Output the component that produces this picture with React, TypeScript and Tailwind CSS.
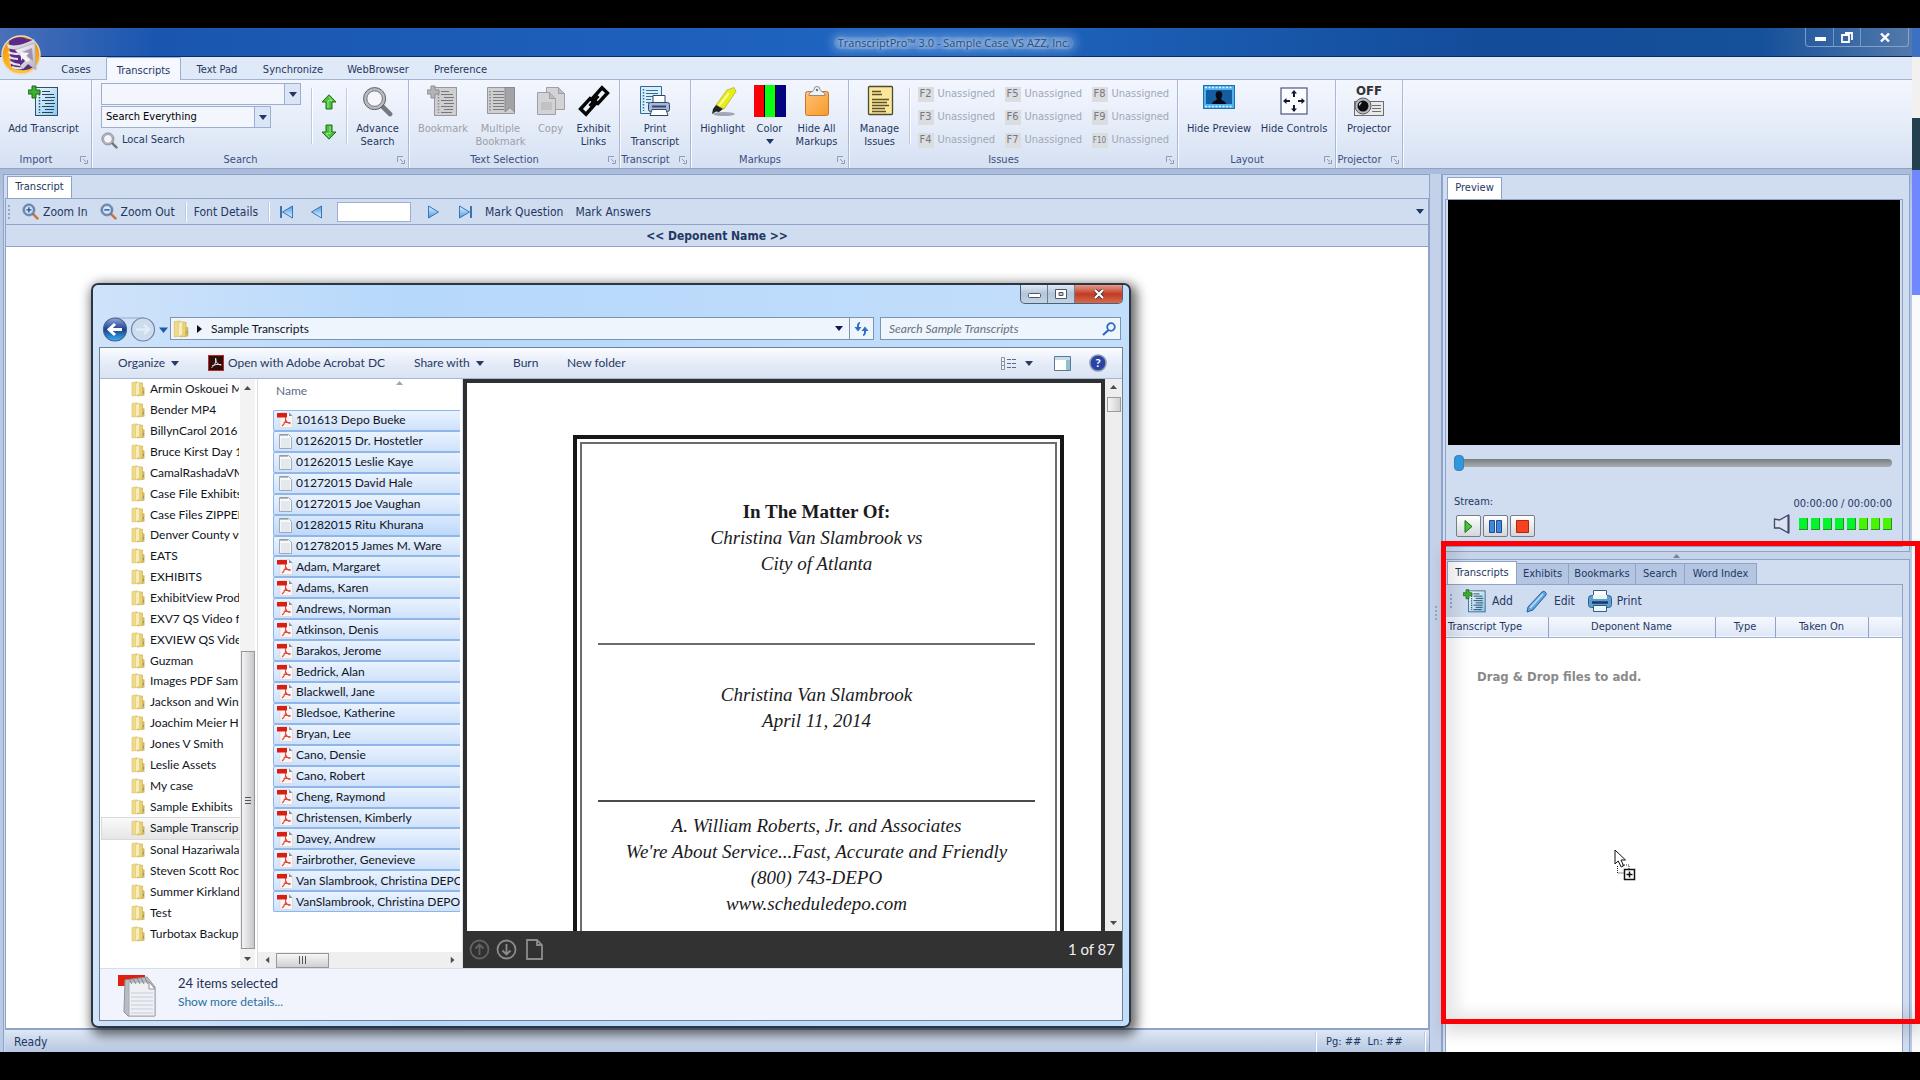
import React, { useState } from 'react';

const FOLDERS = [
  'Armin Oskouei M', 'Bender MP4', 'BillynCarol 2016', 'Bruce Kirst Day 11', 'CamalRashadaVM', 'Case File Exhibits',
  'Case Files ZIPPED', 'Denver County vs', 'EATS', 'EXHIBITS', 'ExhibitView Prod', 'EXV7 QS Video fil',
  'EXVIEW QS Video', 'Guzman', 'Images PDF Sam', 'Jackson and Wins', 'Joachim Meier H', 'Jones V Smith',
  'Leslie Assets', 'My case', 'Sample Exhibits', 'Sample Transcrip', 'Sonal Hazariwala', 'Steven Scott Roc',
  'Summer Kirkland', 'Test', 'Turbotax Backup',
];

const FILES: { name: string; kind: 'pdf' | 'txt' }[] = [
  { name: '101613 Depo Bueke', kind: 'pdf' },
  { name: '01262015 Dr. Hostetler', kind: 'txt' },
  { name: '01262015 Leslie Kaye', kind: 'txt' },
  { name: '01272015 David Hale', kind: 'txt' },
  { name: '01272015 Joe Vaughan', kind: 'txt' },
  { name: '01282015 Ritu Khurana', kind: 'txt' },
  { name: '012782015 James M. Ware', kind: 'txt' },
  { name: 'Adam, Margaret', kind: 'pdf' },
  { name: 'Adams, Karen', kind: 'pdf' },
  { name: 'Andrews, Norman', kind: 'pdf' },
  { name: 'Atkinson, Denis', kind: 'pdf' },
  { name: 'Barakos, Jerome', kind: 'pdf' },
  { name: 'Bedrick, Alan', kind: 'pdf' },
  { name: 'Blackwell, Jane', kind: 'pdf' },
  { name: 'Bledsoe, Katherine', kind: 'pdf' },
  { name: 'Bryan, Lee', kind: 'pdf' },
  { name: 'Cano, Densie', kind: 'pdf' },
  { name: 'Cano, Robert', kind: 'pdf' },
  { name: 'Cheng, Raymond', kind: 'pdf' },
  { name: 'Christensen, Kimberly', kind: 'pdf' },
  { name: 'Davey, Andrew', kind: 'pdf' },
  { name: 'Fairbrother, Genevieve', kind: 'pdf' },
  { name: 'Van Slambrook, Christina DEPO', kind: 'pdf' },
  { name: 'VanSlambrook, Christina DEPO', kind: 'pdf' },
];

const ISSUE_KEYS = ['F2', 'F5', 'F8', 'F3', 'F6', 'F9', 'F4', 'F7', 'F10'];

/* ---------- icons ---------- */

const Caret = ({ className = '' }: { className?: string }) => (
  <svg width={8} height={5} viewBox="0 0 8 5" className={`shrink-0 ${className}`}>
    <path d="M0 0h8L4 5z" fill="currentColor" />
  </svg>
);

const AppLogo = () => (
  <svg width={40} height={40} viewBox="0 0 40 40">
    <defs>
      <radialGradient id="orb" cx="50%" cy="80%" r="80%">
        <stop offset="0" stopColor="#ffd23a" />
        <stop offset="0.6" stopColor="#f9a818" />
        <stop offset="1" stopColor="#e58a0c" />
      </radialGradient>
      <linearGradient id="orbSilver" x1="0" y1="0" x2="1" y2="1">
        <stop offset="0" stopColor="#ffffff" />
        <stop offset="1" stopColor="#b4b0c0" />
      </linearGradient>
    </defs>
    <circle cx="20" cy="20" r="19" fill="url(#orb)" stroke="#e9dcc0" strokeWidth="1.5" />
    <path d="M8 6c5-4 13-5 18-2l7 1-1 27c-6 5-17 4-22-1z" fill="#5b2a86" />
    <path d="M6 9c6 3 17 1 27-5l1 5C25 15 14 16 7 13z" fill="url(#orbSilver)" />
    <path d="M7 17c4 2 7 2 11 2M8 22c4 2 6 2 9 2M9 27c3 2 6 3 10 3M11 32c3 1 6 2 10 1" stroke="#e8e4ef" strokeWidth="2.200" fill="none" />
    <path d="M14 15l20-7 1 27-8-6-5 5-3-3 5-5z" fill="url(#orbSilver)" stroke="#9d99ab" strokeWidth="0.500" />
    <path d="M21 17l10-4 1 13z" fill="#7a6994" opacity="0.6" />
    <path d="M20 17l8 1-3 3 4 4-3 2-4-4-2 3z" fill="#f5f4f8" />
  </svg>
);

const DocLines = ({ muted = false, size = 32 }: { muted?: boolean; size?: number }) => (
  <svg width={size} height={size} viewBox="0 0 32 32">
    <defs>
      <linearGradient id="docBlue" x1="0" y1="0" x2="1" y2="1">
        <stop offset="0" stopColor="#f2fbff" />
        <stop offset="1" stopColor="#86c8f2" />
      </linearGradient>
    </defs>
    <rect x="7.500" y="2.500" width="22" height="28" fill={muted ? '#cfcfd2' : 'url(#docBlue)'} stroke={muted ? '#97979b' : '#2f4f66'} />
    <path d="M11.500 6v22" stroke={muted ? '#8a8a8e' : '#30506a'} strokeWidth="1.500" strokeDasharray="1.500 1.500" />
    <path d="M14 6.500h8M14 9.500h12M17 12.500h10M14 15.500h12M17 18.500h10M14 21.500h12M17 24.500h9M14 27.500h11" stroke={muted ? '#77777b' : '#2c4257'} strokeWidth="1.200" />
    <path d="M4 1h4v4h4v4H8v4H4V9H0V5h4z" fill={muted ? '#b4b4b6' : '#3fae35'} stroke={muted ? '#8f8f92' : '#186b17'} />
  </svg>
);

const MultiBookmarkIcon = () => (
  <svg width={32} height={32} viewBox="0 0 32 32">
    <path d="M2.500 2.500h27v26h-27z" fill="#cfcfd2" stroke="#97979b" />
    <path d="M5 6v20" stroke="#88888c" strokeWidth="1.500" strokeDasharray="1.500 1.500" />
    <path d="M8 6.500h11M8 9.500h11M8 12.500h11M8 15.500h11M8 18.500h11M8 21.500h11M8 24.500h11" stroke="#7b7b7f" strokeWidth="1.200" />
    <path d="M20 2.500h9.500V27L25 22.500 20 27z" fill="#a3a3a7" stroke="#8b8b8f" />
  </svg>
);

const CopyIcon = () => (
  <svg width={32} height={32} viewBox="0 0 32 32" fill="#d3d3d6" stroke="#a0a0a4">
    <path d="M11.500 2.500h12l6 6v16h-18z" />
    <path d="M23.500 2.500v6h6" fill="#bcbcc0" />
    <path d="M2.500 7.500h12l6 6v16h-18z" />
    <path d="M14.500 7.500v6h6" fill="#bcbcc0" />
    <path d="M6 17h11v8H6z" fill="#c2c2c6" stroke="none" />
  </svg>
);

const ChainIcon = () => (
  <svg width={32} height={32} viewBox="0 0 32 32" fill="none" stroke="#050505" strokeWidth="3.400">
    <path d="M14 14L24 2.800l5.500 5.200L20 18.500l-3-2.500" />
    <path d="M18 18L8 29.200 2.500 24 12 13.500l3 2.500" />
    <path d="M11.500 21l9-10" strokeWidth="2.800" />
  </svg>
);

const PrinterBody = ({ x = 0, y = 0, k = 1 }: { x?: number; y?: number; k?: number }) => (
  <g transform={`translate(${x} ${y}) scale(${k})`} stroke="#2e4767">
    <path d="M6 1.500h12v8H6z" fill="#fff" />
    <rect x="1.500" y="8.500" width="21" height="9" rx="2" fill="#a9b6da" />
    <path d="M5 12.500h14" stroke="#33486b" strokeWidth="2" />
    <path d="M5 15.500h14l2 6H3z" fill="#fff" />
  </g>
);

const PrintTranscriptIcon = () => (
  <svg width={32} height={32} viewBox="0 0 32 32">
    <path d="M1.500 1.500h21v27h-21z" fill="#d7eefb" stroke="#2e6b9c" />
    <path d="M4.500 4v22" stroke="#2e6b9c" strokeWidth="1.500" strokeDasharray="1.500 1.500" />
    <path d="M7 5.500h12M7 8.500h12M7 11.500h9M7 14.500h5M7 17.500h3" stroke="#3b6d94" strokeWidth="1.200" />
    <PrinterBody x={8} y={9} />
  </svg>
);

const MarkerIcon = () => (
  <svg width={32} height={32} viewBox="0 0 32 32">
    <ellipse cx="17" cy="29" rx="11" ry="2" fill="#8e93a3" opacity="0.8" />
    <path d="M20 5l7-2.500 2 4L17 24l-8-4z" fill="#e7ee16" stroke="#a9ad20" strokeWidth="0.700" />
    <path d="M22 8L12 21" stroke="#f9fca0" strokeWidth="2" />
    <path d="M9 20l7 4-4 3-3-.5L5 29l1-5z" fill="#222" />
  </svg>
);

const ColorBarsIcon = () => (
  <svg width={32} height={32} viewBox="0 0 32 32">
    <path d="M0 0h32v32H0z" fill="#000" />
    <path d="M0 0h10v32H0z" fill="#fb0007" />
    <path d="M11 0h10v32H11z" fill="#0bff14" />
    <path d="M22 0h10v32H22z" fill="#04047e" />
  </svg>
);

const ClipboardIcon = () => (
  <svg width={32} height={32} viewBox="0 0 32 32">
    <defs>
      <linearGradient id="clip" x1="0" y1="0" x2="1" y2="1">
        <stop offset="0" stopColor="#ffc274" />
        <stop offset="1" stopColor="#f79a2c" />
      </linearGradient>
    </defs>
    <rect x="4.500" y="6.500" width="23" height="24" rx="2" fill="url(#clip)" stroke="#c9782a" />
    <path d="M8 10.500c0-4 4-3 5-6a3 3 0 0 1 6 0c1 3 5 2 5 6z" fill="#f2f2f4" stroke="#8b8b92" />
    <circle cx="16" cy="5" r="1.200" fill="#73737c" />
  </svg>
);

const ManageIcon = () => (
  <svg width={32} height={32} viewBox="0 0 32 32">
    <rect x="4.500" y="1.500" width="24" height="28" rx="1" fill="#fbe79a" stroke="#4b4a33" strokeWidth="1.300" />
    <path d="M8 6.500h9M8 9.500h10M8 14.500h17M8 17.500h15M8 20.500h17M8 23.500h13M8 26.500h14" stroke="#5d532f" strokeWidth="1.300" />
  </svg>
);

const PreviewIcon = () => (
  <svg width={32} height={32} viewBox="0 0 32 32">
    <rect x="0.500" y="0.500" width="31" height="23" fill="#4fb1ee" stroke="#1d6fae" />
    <path d="M2 2.500h28M2 21.500h28" stroke="#dff2ff" strokeWidth="1.500" strokeDasharray="2 1.500" />
    <path d="M3 5h26v14H3z" fill="#135da0" />
    <path d="M9 19c0-3 4-3 5-5-2-3-2-8 2-8s4 5 2 8c1 2 5 2 5 5z" fill="#050a12" />
  </svg>
);

const MoveIcon = () => (
  <svg width={32} height={32} viewBox="0 0 32 32">
    <rect x="3" y="3" width="26" height="26" fill="#fbfcff" stroke="#4f5680" strokeWidth="1.200" />
    <g fill="#15182c">
      <path d="M16 5l3 3.500h-2V12h-2V8.500h-2zM16 27l3-3.500h-2V20h-2v3.500h-2zM5 16l3.500-3v2H12v2H8.500v2zM27 16l-3.500-3v2H20v2h3.500v2z" />
    </g>
  </svg>
);

const ProjectorIcon = () => (
  <svg width={32} height={20} viewBox="0 0 32 20">
    <rect x="1.500" y="4.500" width="29" height="14" fill="#e9e9ea" stroke="#6e6e72" />
    <path d="M19 8.500h9M19 11.500h9M19 14.500h9" stroke="#6f6f73" />
    <circle cx="10" cy="9" r="8" fill="#b9babd" stroke="#5d5d60" />
    <circle cx="10" cy="9" r="5.500" fill="#0d0d0f" />
    <path d="M8.500 5.500a3 3 0 0 0-2 3" stroke="#e8e8e8" fill="none" strokeWidth="1.300" />
  </svg>
);

const Magnifier = ({ size, sign, tint = '#6d6f76' }: { size: number; sign?: string; tint?: string }) => (
  <svg width={size} height={size} viewBox="0 0 16 16" fill="none">
    <path d="M9.800 9.800l4.700 4.700" stroke={sign ? '#c9763a' : '#77787e'} strokeWidth="2.400" strokeLinecap="round" />
    <circle cx="6.500" cy="6.500" r="4.800" fill={sign ? '#d3e6fb' : '#f4f6fb'} stroke={sign ? tint : '#b9bbc1'} strokeWidth="1.500" />
    <circle cx="6.500" cy="6.500" r="5.700" stroke="#54565c" strokeWidth="0.500" />
    <circle cx="6.500" cy="6.500" r="4" stroke="#54565c" strokeWidth="0.400" />
    {sign && <path d={sign} stroke="#2a4f94" strokeWidth="1.300" />}
  </svg>
);

const GreenArrow = ({ down = false }: { down?: boolean }) => (
  <svg width={16} height={16} viewBox="0 0 16 16" className={down ? 'rotate-180' : ''}>
    <path d="M8 .8L15 8h-4v7H5V8H1z" fill="#4cc03c" stroke="#1d6d1a" strokeLinejoin="round" />
    <path d="M8 3l3 3.500H7V14" stroke="#9be889" fill="none" />
  </svg>
);

const NavArrow = ({ back = false, bar = false }: { back?: boolean; bar?: boolean }) => (
  <svg width={15} height={16} viewBox="0 0 15 16" className={back ? 'rotate-180' : ''}>
    <defs>
      <linearGradient id="navBlue" x1="0" y1="0" x2="0" y2="1">
        <stop offset="0" stopColor="#e4f3ff" />
        <stop offset="1" stopColor="#4a9be2" />
      </linearGradient>
    </defs>
    <path d="M1.500 2l10 6-10 6z" fill="url(#navBlue)" stroke="#3a74b5" strokeLinejoin="round" />
    {bar && <path d="M13 2v12" stroke="#3a74b5" strokeWidth="2" />}
  </svg>
);

const FolderIcon = ({ size = 16 }: { size?: number }) => (
  <svg width={size} height={size} viewBox="0 0 16 16" className="shrink-0">
    <path d="M2 1.500l5-.7v13.500l-5 .7z" fill="#efdb88" stroke="#d6bb62" strokeWidth="0.600" />
    <path d="M7 2h5.500v12.500L7 15z" fill="#ecd271" stroke="#c8aa4c" strokeWidth="0.600" />
    <path d="M5.500 2.500l4-1.500v12l-4 2z" fill="#f8edba" stroke="#dcc67a" strokeWidth="0.600" />
    <path d="M12.500 6l2 .5v8l-3 .5z" fill="#d6b654" />
    <path d="M13.500 10v2" stroke="#5f9fd0" />
  </svg>
);

const PdfIcon = () => (
  <svg width={16} height={16} viewBox="0 0 16 16" className="shrink-0">
    <path d="M3 .5h9l3.500 3.500v11.500H3z" fill="#fbf7f7" stroke="#d9d4d6" strokeWidth="0.700" />
    <path d="M12 .5V4h3.500z" fill="#8f8f95" />
    <path d="M0 1h10v4.500H0z" fill="#d71f14" />
    <path d="M8.500 5c.5 3.500-1 7-3.500 9M8.500 7.500c1 2.500 3 4 5 4M6.500 11c2-.8 4-1 7-.3" stroke="#e0483c" fill="none" strokeWidth="1.100" />
  </svg>
);

const TxtIcon = () => (
  <svg width={16} height={16} viewBox="0 0 16 16" className="shrink-0">
    <path d="M2.500 1.500h9l3 3v11h-12z" fill="#f6f8fa" stroke="#8f979f" strokeWidth="0.800" />
    <path d="M3 1l1 2 1-2 1 2 1-2 1 2 1-2 1 2 1-2" stroke="#8b9299" fill="none" strokeWidth="0.700" />
    <path d="M4 6h9M4 8h9M4 10h9M4 12h9M4 14h9" stroke="#c6d0d8" strokeWidth="0.800" />
  </svg>
);

const CursorIcon = () => (
  <svg width={22} height={32} viewBox="0 0 22 32">
    <path d="M1 1v14l3.200-3 3 6 2.500-1.200L7 11h4.500z" fill="#fff" stroke="#111" />
    <path d="M3.500 17v7h7M8 16h7v5" fill="none" stroke="#222" strokeDasharray="1 1" />
    <rect x="10.500" y="20.500" width="10" height="10" fill="#fff" stroke="#111" strokeWidth="1.500" />
    <path d="M15.500 22.500v6M12.500 25.500h6" stroke="#111" strokeWidth="1.500" />
  </svg>
);

/* ---------- ribbon ---------- */

interface GroupProps {
  title: string;
  className: string;
  children: React.ReactNode;
}

const RibbonGroup: React.FC<GroupProps> = ({ title, className, children }) => (
  <section className={`flex shrink-0 flex-col border-r border-[#a9b8d6] shadow-[1px_0_0_#f6f9ff] ${className}`}>
    <div className="flex h-[72px] justify-center">{children}</div>
    <div className="flex h-4 items-center pr-[3px] text-[#3b4f80]">
      <span className="flex-1 pr-2 text-center whitespace-nowrap">{title}</span>
      <button aria-label={`${title} options`}>
        <svg width={8} height={8} viewBox="0 0 8 8" fill="none" stroke="#8d9abb">
          <path d="M.5 6V.5H6M3 3l3 3M7.500 4v3.500H4" />
        </svg>
      </button>
    </div>
  </section>
);

interface RibbonButtonProps {
  icon: React.ReactNode;
  label: string;
  className: string;
  disabled?: boolean;
  menu?: boolean;
}

const RibbonButton: React.FC<RibbonButtonProps> = ({ icon, label, className, disabled, menu }) => (
  <button disabled={disabled} className={`flex shrink-0 flex-col items-center pt-[5px] leading-[13px] disabled:text-[#9da0a8] ${className}`}>
    <span className="mb-[5px] flex h-8 shrink-0 flex-col items-center justify-center">{icon}</span>
    <span>{label}</span>
    {menu && <Caret className="mt-1" />}
  </button>
);

const Separator = ({ className = 'h-14' }: { className?: string }) => (
  <div className={`w-px shrink-0 bg-[#bccae2] shadow-[1px_0_0_#fff] ${className}`} />
);

const Ribbon = () => (
  <div className="flex h-[89px] border-b border-[#8fa3c9] bg-linear-to-b from-[#f3f6fe] via-[#e6edf9] to-[#d5e0f2]">
    <RibbonGroup title="Import" className="w-[92px]">
      <RibbonButton icon={<DocLines />} label="Add Transcript" className="w-[88px] pr-1 whitespace-nowrap" />
    </RibbonGroup>

    <RibbonGroup title="Search" className="w-[317px]">
      <div className="flex w-[219px] flex-col gap-px pl-[9px] pt-[3px]">
        <div className="flex h-[22px] w-[200px] border border-[#9dafd0] bg-[#f3f6fd]">
          <input aria-label="Search text" className="min-w-0 flex-1 bg-transparent px-1 outline-none" />
          <button aria-label="Search history" className="flex w-4 items-center justify-center border-l border-[#9dafd0] bg-[#dbe5f5]"><Caret /></button>
        </div>
        <div className="flex h-[22px] w-[170px] border border-[#9dafd0] bg-[#f3f6fd]">
          <select aria-label="Search scope" className="min-w-0 flex-1 appearance-none px-1 text-black outline-none">
            <option>Search Everything</option>
          </select>
          <span className="flex w-4 items-center justify-center border-l border-[#9dafd0] bg-[#dbe5f5]"><Caret /></span>
        </div>
        <button className="mt-[3px] flex items-center gap-1"><Magnifier size={17} />Local Search</button>
      </div>
      <Separator className="mt-2 h-14" />
      <div className="flex w-[34px] flex-col items-center gap-[14px] pt-[14px]">
        <button aria-label="Find previous"><GreenArrow /></button>
        <button aria-label="Find next"><GreenArrow down /></button>
      </div>
      <Separator className="mt-2 h-14" />
      <RibbonButton icon={<Magnifier size={31} />} label="Advance Search" className="w-[61px] px-1" />
    </RibbonGroup>

    <RibbonGroup title="Text Selection" className="w-[211px]">
      <RibbonButton icon={<DocLines muted />} label="Bookmark" className="w-[59px]" disabled />
      <RibbonButton icon={<MultiBookmarkIcon />} label="Multiple Bookmark" className="w-[56px]" disabled />
      <RibbonButton icon={<CopyIcon />} label="Copy" className="w-[44px]" disabled />
      <RibbonButton icon={<ChainIcon />} label="Exhibit Links" className="w-[42px]" />
    </RibbonGroup>

    <RibbonGroup title="Transcript" className="w-[71px]">
      <RibbonButton icon={<PrintTranscriptIcon />} label="Print Transcript" className="w-[66px]" />
    </RibbonGroup>

    <RibbonGroup title="Markups" className="w-[158px]">
      <RibbonButton icon={<MarkerIcon />} label="Highlight" className="w-[54px]" />
      <RibbonButton icon={<ColorBarsIcon />} label="Color" className="w-[40px]" menu />
      <RibbonButton icon={<ClipboardIcon />} label="Hide All Markups" className="w-[54px]" />
    </RibbonGroup>

    <RibbonGroup title="Issues" className="w-[329px]">
      <RibbonButton icon={<ManageIcon />} label="Manage Issues" className="w-[50px]" />
      <Separator className="mt-2 ml-1 h-14" />
      <div className="grid grid-cols-3 content-start gap-x-[7px] gap-y-2 pl-2 pt-[7px]">
        {ISSUE_KEYS.map(key => (
          <button key={key} disabled className="flex h-[15px] w-20 items-center gap-1 text-[#a0a8b8]">
            <span className={`flex h-[15px] w-4 items-center justify-center bg-[#dcdde0] text-[#74777e] ${key === 'F10' ? 'text-[8px]' : ''}`}>{key}</span>
            Unassigned
          </button>
        ))}
      </div>
    </RibbonGroup>

    <RibbonGroup title="Layout" className="w-[158px]">
      <RibbonButton icon={<PreviewIcon />} label="Hide Preview" className="w-[75px] whitespace-nowrap" />
      <RibbonButton icon={<MoveIcon />} label="Hide Controls" className="w-[75px] whitespace-nowrap" />
    </RibbonGroup>

    <RibbonGroup title="Projector" className="w-[67px]">
      <RibbonButton
        icon={<><b className="text-[13px] leading-3 font-bold text-[#333]">OFF</b><ProjectorIcon /></>}
        label="Projector"
        className="w-[64px]"
      />
    </RibbonGroup>
  </div>
);

/* ---------- main window panes ---------- */

const Grip = () => (
  <span className="flex flex-col gap-0.5">
    {[0, 1, 2, 3].map(i => <i key={i} className="block size-0.5 bg-[#94a6c9]" />)}
  </span>
);

const TranscriptPane = () => (
  <section className="flex min-w-0 flex-1 flex-col border-l border-t border-[#8fa3c9] bg-[#d0dcef] pl-px">
    <div className="flex h-[23px] items-end pl-0.5">
      <button className="h-[22px] w-[65px] border-x border-t border-[#8fa3c9] bg-white">Transcript</button>
    </div>
    <div className="flex min-h-0 flex-1 flex-col border-x border-t border-[#8fa3c9]">
      <div className="flex h-[25px] items-center pl-0.5 pr-1 text-[12px]">
        <Grip />
        <button className="ml-3 flex items-center gap-1"><Magnifier size={17} sign="M4 6.500h5M6.500 4v5" tint="#5c8fd0" />Zoom In</button>
        <button className="ml-3 flex items-center gap-1"><Magnifier size={17} sign="M4 6.500h5" tint="#5c8fd0" />Zoom Out</button>
        <Separator className="ml-2.5 h-5" />
        <button className="ml-2">Font Details</button>
        <Separator className="ml-2.5 h-5" />
        <button aria-label="First page" className="ml-2.5"><NavArrow back bar /></button>
        <button aria-label="Previous page" className="ml-3.5"><NavArrow back /></button>
        <input aria-label="Page" className="ml-[14px] h-5 w-[74px] border border-[#9dafd0] bg-white px-1 outline-none" />
        <button aria-label="Next page" className="ml-4"><NavArrow /></button>
        <button aria-label="Last page" className="ml-4"><NavArrow bar /></button>
        <button className="ml-3">Mark Question</button>
        <button className="ml-3">Mark Answers</button>
        <button aria-label="Toolbar options" className="ml-auto"><Caret /></button>
      </div>
      <div className="flex h-[23px] items-center justify-center border-y border-[#8fa3c9] text-[12px] font-bold">&lt;&lt; Deponent Name &gt;&gt;</div>
      <div className="min-h-0 flex-1 bg-white" />
    </div>
    <footer className="flex h-[24px] items-center border-t-2 border-[#8fa3c9] bg-linear-to-b from-[#dde7f5] to-[#b7c8e2] pt-0.5">
      <span className="pl-[9px] text-[12px]">Ready</span>
      <Separator className="ml-auto h-5" />
      <span className="w-[108px] pl-2.5">Pg: ## &nbsp;Ln: ##</span>
      <Separator className="mr-1 h-5" />
    </footer>
  </section>
);

const MediaButton = ({ label, children }: { label: string; children: React.ReactNode }) => (
  <button aria-label={label} className="flex h-[22px] w-[25px] items-center justify-center rounded-xs border border-[#777c86] bg-linear-to-b from-white to-[#d4d6da]">
    <svg width={13} height={13} viewBox="0 0 13 13">{children}</svg>
  </button>
);

const PreviewPane = () => (
  <section className="flex flex-col border border-[#8fa3c9] bg-[#d0dcef] pb-1 pr-1.5 pl-0.5">
    <div className="flex h-[24px] items-end pl-0.5">
      <button className="h-[22px] w-[55px] border-x border-t border-[#8fa3c9] bg-white">Preview</button>
    </div>
    <div className="flex flex-col border border-[#8fa3c9] px-0.5">
      <div className="h-[245px] bg-black" />
      <div className="flex flex-col pl-1.5 pr-2 pt-[14px]">
        <input
          type="range"
          aria-label="Position"
          defaultValue={0}
          className="h-2 w-full appearance-none rounded-full bg-linear-to-b from-[#76807f] to-[#a8adb1] [&::-webkit-slider-thumb]:h-4 [&::-webkit-slider-thumb]:w-2.5 [&::-webkit-slider-thumb]:appearance-none [&::-webkit-slider-thumb]:rounded-[4px] [&::-webkit-slider-thumb]:border [&::-webkit-slider-thumb]:border-[#3b7fb8] [&::-webkit-slider-thumb]:bg-[#2f97e0]"
        />
        <div className="mt-[27px] flex justify-between">
          <div>
            <div className="h-[15px] leading-[15px]">Stream:</div>
            <div className="flex gap-0.5 pl-0.5 pt-[6px]">
              <MediaButton label="Play"><path d="M3 .5l7 6-7 6z" fill="#49c43a" stroke="#1d6e1a" /></MediaButton>
              <MediaButton label="Pause"><path d="M.5.5h5v12h-5zM7.500.5h5v12h-5z" fill="#3f86dc" stroke="#1f4d93" /></MediaButton>
              <MediaButton label="Stop"><path d="M.5.5h12v12H.5z" fill="#f8421f" stroke="#b02412" /></MediaButton>
            </div>
          </div>
          <div className="flex flex-col items-end">
            <div className="h-[20px] pt-[2px] leading-[15px]">00:00:00 / 00:00:00</div>
            <div className="flex items-center gap-2">
              <svg width={18} height={20} viewBox="0 0 18 20">
                <path d="M1.500 5v9h5l9 5V1l-9 5z" fill="#dde2f2" stroke="#43486b" strokeWidth="1.300" />
                <path d="M15.500 1v18" stroke="#43486b" strokeWidth="2" />
              </svg>
              <div className="flex gap-[3px]" role="meter" aria-label="Volume" aria-valuenow={8} aria-valuemax={8}>
                {[0, 1, 2, 3, 4, 5, 6, 7].map(i => (
                  <i key={i} className={`block h-3 w-[9px] border-r border-b border-[#2c8a2c] ${i < 5 ? 'bg-[#00f52a]' : 'bg-[#46f500]'}`} />
                ))}
              </div>
            </div>
          </div>
        </div>
        <div className="h-[9px]" />
      </div>
    </div>
  </section>
);

const LIST_TABS = [
  { name: 'Transcripts', width: 'w-[70px]' },
  { name: 'Exhibits', width: 'w-[53px]' },
  { name: 'Bookmarks', width: 'w-[68px]' },
  { name: 'Search', width: 'w-[50px]' },
  { name: 'Word Index', width: 'w-[73px]' },
];

const ListPane = () => {
  const [tab, setTab] = useState('Transcripts');
  return (
    <section className="flex min-h-0 flex-1 flex-col border-x border-t border-[#8fa3c9] bg-[#d0dcef] pl-0.5 pr-1.5">
      <div className="flex h-[24px] items-end pl-0.5">
        {LIST_TABS.map(({ name, width }) => (
          <button
            key={name}
            onClick={() => setTab(name)}
            className={`border-x border-t border-[#8fa3c9] whitespace-nowrap ${width} ${tab === name ? 'h-[23px] bg-white' : '-ml-px h-[21px] bg-[#b3c5e0]'}`}
          >
            {name}
          </button>
        ))}
      </div>
      <div className="flex min-h-0 flex-1 flex-col border-x border-t border-[#8fa3c9]">
        <div className="flex h-[32px] items-center pl-1 text-[12px]">
          <Grip />
          <button className="ml-[11px] flex items-center gap-[5px]"><DocLines size={24} />Add</button>
          <button className="ml-[13px] flex items-center gap-1.5">
            <svg width={22} height={24} viewBox="0 0 22 24">
              <path d="M2 18L16 3c2-2 5 1 4 3L7 21l-6 2z" fill="#5ea6df" stroke="#27609c" />
              <path d="M4 19L17 5" stroke="#bfe0fa" strokeWidth="1.500" />
            </svg>
            Edit
          </button>
          <button className="ml-3 flex items-center gap-1">
            <svg width={26} height={24} viewBox="0 0 26 24" stroke="#2c5f8f">
              <path d="M6.500 1.500h13v8h-13z" fill="#fff" />
              <rect x="1.500" y="6.500" width="23" height="12" rx="3" fill="#5f9ed0" />
              <path d="M6 6h14v4H6z" fill="#e8f3fb" stroke="none" />
              <path d="M5 13.500h16" stroke="#173d63" strokeWidth="2.500" />
              <path d="M6.500 16.500h13v6h-13z" fill="#eef6fc" />
            </svg>
            Print
          </button>
        </div>
        <div className="min-h-0 flex-1 bg-white">
          <table className="w-full table-fixed border-collapse">
            <thead>
              <tr className="h-5 border-b border-[#a3b4d3] bg-linear-to-b from-[#f5f8fe] to-[#dfe8f6]">
                <th className="w-[102px] border-r border-[#8fa3c9] pl-0.5 text-left font-normal whitespace-nowrap">Transcript Type</th>
                <th className="w-[167px] border-r border-[#8fa3c9] font-normal">Deponent Name</th>
                <th className="w-[60px] border-r border-[#8fa3c9] font-normal">Type</th>
                <th className="w-[93px] border-r border-[#8fa3c9] font-normal">Taken On</th>
                <th />
              </tr>
            </thead>
            <tbody>
              <tr>
                <td colSpan={5} className="pl-[31px] pt-[31px] text-[13px] leading-4 font-bold text-[#8a8a8c]">Drag &amp; Drop files to add.</td>
              </tr>
            </tbody>
          </table>
        </div>
      </div>
    </section>
  );
};

/* ---------- explorer window ---------- */

const ScrollArrow = ({ className = '' }: { className?: string }) => (
  <svg width={7} height={4} viewBox="0 0 7 4" className={`shrink-0 ${className}`}>
    <path d="M0 4h7L3.500 0z" fill="#4a4d52" />
  </svg>
);

const ExplorerWindow = () => (
  <div className="absolute left-[91px] top-[283px] flex h-[745px] w-[1040px] flex-col rounded-[7px] border-2 border-[#2c3543] bg-linear-to-r from-[#cfe3fa] via-[#b6d8fb] via-30% to-[#c3defb] px-[6px] pb-[5px] font-['Lato','Open_Sans',sans-serif] text-[12px] text-[#10141c] shadow-[3px_4px_12px_3px_rgba(0,0,0,0.6)] [font-variant-ligatures:none]">
    <div className="flex h-8 items-start justify-end">
      <div className="flex h-[19px] overflow-hidden rounded-b-[5px] border-x border-b border-[#4e6078] bg-linear-to-b from-[#dde8f4] via-[#b3c5da] to-[#c3d3e6]">
        <button aria-label="Minimize" className="flex w-[27px] items-center justify-center border-r border-[#6d7f97]">
          <svg width={13} height={10} viewBox="0 0 13 10"><rect x=".5" y="4.500" width="12" height="4" rx="1" fill="#fff" stroke="#4c5666" /></svg>
        </button>
        <button aria-label="Maximize" className="flex w-[27px] items-center justify-center border-r border-[#6d7f97]">
          <svg width={12} height={10} viewBox="0 0 12 10"><path d="M.5.5h11v9H.5zM4 3.500v3h4v-3z" fill="#fff" stroke="#4c5666" fillRule="evenodd" /></svg>
        </button>
        <button aria-label="Close" className="flex w-[47px] items-center justify-center bg-linear-to-b from-[#e49a8b] via-[#c23a22] to-[#d66a4c]">
          <svg width={12} height={10} viewBox="0 0 12 10"><path d="M2 1l8 8M10 1L2 9" stroke="#4f3038" strokeWidth="4" /><path d="M2 1l8 8M10 1L2 9" stroke="#fff" strokeWidth="2.200" /></svg>
        </button>
      </div>
    </div>

    <div className="flex h-[30px] shrink-0 items-start pl-[3px] pr-0.5">
      <svg width={66} height={26} viewBox="0 0 66 26" className="mr-[2px] shrink-0">
        <defs>
          <linearGradient id="back" x1="0" y1="0" x2="0" y2="1">
            <stop offset="0" stopColor="#8fa9d8" />
            <stop offset="0.5" stopColor="#1a3f94" />
            <stop offset="1" stopColor="#35b4f2" />
          </linearGradient>
        </defs>
        <path d="M13 1h29" stroke="#93abc9" />
        <circle cx="13" cy="12.500" r="11.500" fill="url(#back)" stroke="#4a5f85" strokeWidth="1.200" />
        <path d="M20 12.500H8M13 7l-6 5.500 6 5.500" stroke="#fff" strokeWidth="3" fill="none" />
        <circle cx="41" cy="12.500" r="11.500" fill="#cddcee" stroke="#73849f" strokeWidth="1.200" />
        <path d="M34 12.500h12M42 8l5 4.500-5 4.500" stroke="#e3ecf6" strokeWidth="2.500" fill="none" />
        <path d="M57 10.500h9l-4.500 5.500z" fill="#1d5aa8" />
      </svg>
      <div className="flex h-[23px] min-w-0 flex-1 items-center border border-[#7d93b0] bg-[#eef5fd] pl-px">
        <FolderIcon size={18} />
        <svg width={5} height={8} viewBox="0 0 5 8" className="ml-[7px] mr-[9px]"><path d="M0 0l5 4-5 4z" fill="#111" /></svg>
        <span>Sample Transcripts</span>
        <button aria-label="Previous locations" className="ml-auto mr-1.5 text-[#0e1a55]"><Caret /></button>
        <button aria-label="Refresh" className="flex h-full w-6 items-center justify-center border-l border-[#7d93b0]">
          <svg width={15} height={14} viewBox="0 0 15 14" fill="#2d6fc4">
            <path d="M6 0v1.500C5 2 5 3 5 5h2.500L4 9.500.5 5H3c0-3 .5-4.500 3-5z" />
            <path d="M9 14v-1.500c1-.5 1-1.500 1-3.500H7.500L11 4.500 14.500 9H12c0 3-.5 4.500-3 5z" />
          </svg>
        </button>
      </div>
      <div className="ml-1.5 flex h-[23px] w-[241px] items-center border border-[#7d93b0] bg-[#eef5fd] pl-2 pr-1">
        <input aria-label="Search folder" placeholder="Search Sample Transcripts" className="min-w-0 flex-1 bg-transparent italic outline-none placeholder:text-[#68717f]" />
        <svg width={14} height={14} viewBox="0 0 14 14" fill="none" stroke="#2c6bbd">
          <circle cx="9" cy="5" r="3.800" strokeWidth="1.800" />
          <path d="M6.500 8L1 13" strokeWidth="2.200" />
        </svg>
      </div>
    </div>

    <div className="flex min-h-0 flex-1 flex-col border border-[#6f7f94] bg-white">
      <div className="flex h-[31px] shrink-0 items-center border-b border-[#a8b8cf] bg-linear-to-b from-[#fafcff] via-[#e6ecf8] to-[#d9e3f3] pl-[18px] pr-[15px] text-[#263a62]">
        <button className="flex w-[90px] items-center gap-1.5">Organize<Caret /></button>
        <button className="flex w-[206px] items-center gap-1">
          <svg width={16} height={16} viewBox="0 0 16 16">
            <rect x=".5" y=".5" width="15" height="15" fill="#2c0f0d" stroke="#c8281c" />
            <path d="M7.500 3c1.500 3-1 8-4 9.500M7.500 4c0 3 2.500 6 6 6M4 11c2.500-1.500 5.500-2 9-1.300" stroke="#f4e9e9" fill="none" />
          </svg>
          Open with Adobe Acrobat DC
        </button>
        <button className="flex w-[99px] items-center gap-1.5">Share with<Caret /></button>
        <button className="w-[54px] text-left">Burn</button>
        <button>New folder</button>
        <button aria-label="Change view" className="ml-auto">
          <svg width={16} height={13} viewBox="0 0 16 13">
            <path d="M.5.5h3v12h-3z" fill="#f1f3f7" stroke="#8b93a3" />
            <path d="M.5 4.500h3M.5 8.500h3" stroke="#8b93a3" />
            <path d="M6 2.500h4M11 2.500h4M6 6.500h4M11 6.500h4M6 10.500h4M11 10.500h4" stroke="#5a6b86" />
          </svg>
        </button>
        <button aria-label="View options" className="ml-2"><Caret /></button>
        <button aria-label="Preview pane" className="ml-[21px]">
          <svg width={17} height={15} viewBox="0 0 17 15">
            <path d="M.5.5h16v14H.5z" fill="#fff" stroke="#5f7690" />
            <path d="M1 1h15v3H1z" fill="#c6dbee" />
            <path d="M12 4h4v10h-4z" fill="#8fc0d0" />
          </svg>
        </button>
        <button aria-label="Help" className="ml-[18px]">
          <svg width={18} height={18} viewBox="0 0 18 18">
            <circle cx="9" cy="9" r="8" fill="#2743a5" stroke="#8b96ad" strokeWidth="1.500" />
            <text x="9" y="13" textAnchor="middle" fontSize="12" fontWeight="bold" fill="#fff">?</text>
          </svg>
        </button>
      </div>

      <div className="flex min-h-0 flex-1">
        <nav className="flex w-[158px] shrink-0 border-r border-[#d8e0ea]">
          <div className="flex w-[140px] flex-col overflow-hidden">
            <ul className="flex h-[565px] flex-col">
              {FOLDERS.map(name => (
                <li
                  key={name}
                  className={`ml-px flex min-h-0 flex-1 items-center gap-1 overflow-hidden pl-7 whitespace-nowrap ${name === 'Sample Transcrip' ? 'border border-r-0 border-[#d9d9d9] bg-linear-to-b from-[#fafafa] to-[#e6e6e6]' : 'border-x border-transparent'}`}
                >
                  <FolderIcon />
                  {name}
                </li>
              ))}
            </ul>
          </div>
          <div className="flex w-[15px] flex-col items-center bg-[#f3f3f4] py-[7px]">
            <ScrollArrow />
            <div className="mt-[261px] flex w-[14px] flex-1 flex-col items-center justify-center gap-0.5 border border-[#979797] bg-linear-to-r from-[#f4f4f4] to-[#c7c8cc]">
              {[0, 1, 2].map(i => <i key={i} className="block h-px w-1.5 bg-[#555]" />)}
            </div>
            <ScrollArrow className="mt-2 rotate-180" />
          </div>
        </nav>

        <div className="flex w-[205px] shrink-0 flex-col border-r border-[#d8e0ea]">
          <div className="relative h-[31px] shrink-0 pl-[18px] pt-[3px] leading-[18px] text-[#5b6b88]">
            Name
            <ScrollArrow className="absolute left-[138px] top-0.5 opacity-50" />
          </div>
          <ul className="ml-[15px] mr-0.5 flex h-[502px] shrink-0 flex-col">
            {FILES.map(({ name, kind }) => (
              <li
                key={name}
                className={`flex min-h-0 flex-1 items-center gap-[3px] overflow-hidden rounded-l-xs border border-r-0 border-[#8eb6e8] pl-[3px] whitespace-nowrap ${name === '01282015 Ritu Khurana' ? 'bg-linear-to-b from-[#d9e9fd] to-[#bdd8fa]' : 'bg-linear-to-b from-[#eaf3fe] to-[#cfe1fb]'}`}
              >
                {kind === 'pdf' ? <PdfIcon /> : <TxtIcon />}
                {name}
              </li>
            ))}
          </ul>
          <div className="mt-auto flex h-4 items-center bg-[#efeff0] px-1.5">
            <ScrollArrow className="-rotate-90" />
            <div className="ml-[5px] flex h-[15px] w-[53px] items-center justify-center gap-0.5 border border-[#979797] bg-linear-to-b from-[#f6f6f6] to-[#cfd0d3]">
              {[0, 1, 2].map(i => <i key={i} className="block h-2 w-px bg-[#555]" />)}
            </div>
            <ScrollArrow className="ml-auto rotate-90" />
          </div>
        </div>

        <div className="flex min-w-0 flex-1 flex-col bg-[#323232]">
          <div className="flex min-h-0 flex-1">
            <article className="min-w-0 flex-1 overflow-hidden border-x-4 border-t-4 border-[#2f3032] bg-white pl-[106px] pr-[37px] pt-[52px] font-['Liberation_Serif',serif] text-[19px] leading-[26px] text-[#1b1b1d]">
              <div className="h-[600px] border-4 border-[#161616] p-[3px]">
                <div className="h-full border-2 border-[#6c6c6e] pr-5 pl-4 pt-[55px] text-center whitespace-nowrap italic">
                  <h1 className="font-bold not-italic">In The Matter Of:</h1>
                  <p>Christina Van Slambrook vs</p>
                  <p>City of Atlanta</p>
                  <hr className="mt-[66px] border-t-2 border-[#6b6b6d]" />
                  <p className="mt-[37px]">Christina Van Slambrook</p>
                  <p>April 11, 2014</p>
                  <hr className="mt-[66px] border-t-2 border-[#4b4b4d]" />
                  <p className="mt-[11px]">A. William Roberts, Jr. and Associates</p>
                  <p>We're About Service...Fast, Accurate and Friendly</p>
                  <p>(800) 743-DEPO</p>
                  <p>www.scheduledepo.com</p>
                </div>
              </div>
            </article>
            <div className="flex w-[17px] flex-col items-center bg-[#eeeeef] py-1.5">
              <ScrollArrow />
              <div className="mt-2 h-[15px] w-[14px] border border-[#9a9a9a] bg-linear-to-r from-[#f6f6f6] to-[#cfd0d3]" />
              <ScrollArrow className="mt-auto rotate-180" />
            </div>
          </div>
          <div className="flex h-[37px] shrink-0 items-center gap-1.5 pl-1.5 pr-[7px] text-[#f0f0f0]">
            <button aria-label="Previous page">
              <svg width={21} height={21} viewBox="0 0 21 21" fill="none" stroke="#626262" strokeWidth="1.800">
                <circle cx="10.500" cy="10.500" r="9" />
                <path d="M10.500 16V6M6.500 9.500l4-4 4 4" />
              </svg>
            </button>
            <button aria-label="Next page">
              <svg width={21} height={21} viewBox="0 0 21 21" fill="none" stroke="#8c8c8c" strokeWidth="1.800">
                <circle cx="10.500" cy="10.500" r="9" />
                <path d="M10.500 5v10M6.500 11.500l4 4 4-4" />
              </svg>
            </button>
            <button aria-label="Fit page" className="ml-[3px]">
              <svg width={17} height={21} viewBox="0 0 17 21" fill="none" stroke="#8c8c8c" strokeWidth="1.800">
                <path d="M1 1h10l5 5v14H1zM11 1v5h5" />
              </svg>
            </button>
            <span className="ml-auto text-[15px]">1 of 87</span>
          </div>
        </div>
      </div>

      <div className="flex h-[52px] shrink-0 border-t border-[#d5dfeb] bg-[#f1f4fc] pl-[17px] pt-[5px]">
        <svg width={42} height={44} viewBox="0 0 42 44">
          <path d="M1 1h27v11H1z" fill="#e0200f" />
          <path d="M8 6l22-3 8 10v29H11L7 38z" fill="#b9bdc3" stroke="#8f949b" />
          <path d="M12 8h20l6 7v27H12z" fill="#eef0f3" stroke="#a5aab1" />
          <path d="M32 8v7h6z" fill="#fff" stroke="#8f949b" />
          <path d="M12 5l3 5M16 5l3 5M20 4l3 6M24 4l3 6M28 4l3 6" stroke="#7e838a" />
          <path d="M14 19h22M14 23h22M14 27h22M14 31h22M14 35h22M14 39h22" stroke="#c3cfdc" />
        </svg>
        <div className="ml-[19px] flex flex-col gap-[3px] pt-px leading-4">
          <span className="text-[13px] text-[#1f3154]">24 items selected</span>
          <a href="#details" className="text-[#25709f]">Show more details...</a>
        </div>
      </div>
    </div>
  </div>
);

/* ---------- app ---------- */

const RIBBON_TABS = [
  { name: 'Cases', width: 'w-[60px]' },
  { name: 'Transcripts', width: 'w-[75px]' },
  { name: 'Text Pad', width: 'w-[72px]' },
  { name: 'Synchronize', width: 'w-[80px]' },
  { name: 'WebBrowser', width: 'w-[90px]' },
  { name: 'Preference', width: 'w-[75px]' },
];

export default function App() {
  const [tab, setTab] = useState('Transcripts');

  return (
    <div className="relative flex min-h-screen overflow-hidden bg-black py-7 font-['DejaVu_Sans_Condensed','DejaVu_Sans',sans-serif] text-[11px] text-[#1f3763]">
      <main className="relative flex min-w-0 flex-1 flex-col bg-[#b9c9e2]">
        <header className="flex h-[29px] items-start justify-end border-b border-[#0d2c66] bg-[linear-gradient(to_right,#4a70b8,#1a56b0_8%,#1f66c2_50%,#134c99_78%,#15509a_92%,#5279ab)]">
          <h1 className="flex h-[29px] flex-1 items-center justify-center pl-[103px] font-['Open_Sans',sans-serif] text-[11px] text-[#2b4c78]">
            <span className="rounded-full bg-white/25 px-1 leading-3 shadow-[0_0_8px_4px_rgba(200,220,245,0.25)] [text-shadow:0_0_4px_#cfe0f5,0_0_6px_#cfe0f5]">TranscriptPro™ 3.0 - Sample Case VS AZZ, Inc.</span>
          </h1>
          <div className="mr-[3px] flex h-[19px] rounded-b-[4px] border-x border-b border-[#9db8dc]/70 text-white">
            <button aria-label="Minimize" className="flex w-7 items-center justify-center border-r border-[#9db8dc]/60 pt-px pl-px">
              <svg width={11} height={9} viewBox="0 0 11 9"><path d="M0 4h11v4H0z" fill="#fff" /></svg>
            </button>
            <button aria-label="Restore" className="flex w-[27px] items-center justify-center border-r border-[#9db8dc]/60">
              <svg width={12} height={11} viewBox="0 0 12 11" fill="none" stroke="#fff" strokeWidth="1.800"><path d="M1 3h7v7H1zM4 1h7v7" /></svg>
            </button>
            <button aria-label="Close" className="flex w-[47px] items-center justify-center">
              <svg width={10} height={9} viewBox="0 0 10 9" stroke="#fff" strokeWidth="2.400"><path d="M1 .5l8 8M9 .5l-8 8" /></svg>
            </button>
          </div>
        </header>

        <nav className="flex h-[23px] items-end border-b border-[#a3b4d3] bg-[#dfe9f7] pl-[46px]">
          {RIBBON_TABS.map(({ name, width }) => (
            <button
              key={name}
              onClick={() => setTab(name)}
              className={`h-[22px] rounded-t-xs pt-1 ${width} ${tab === name ? '-mb-px h-[23px] border-x border-t border-[#9dafd0] bg-[#f5f8fe]' : ''}`}
            >
              {name}
            </button>
          ))}
        </nav>
        <div className="absolute left-px top-[7px]"><AppLogo /></div>

        <Ribbon />

        <div className="flex min-h-0 flex-1 bg-linear-to-b from-[#a9bbd9] to-[#b9cae4] to-5% pl-[3px] pr-0.5 pt-[5px]">
          <TranscriptPane />
          <div className="flex w-[13px] shrink-0 items-center justify-center border-x border-[#8fa3c9] bg-[#c3d2e8]"><Grip /></div>
          <div className="flex w-[468px] shrink-0 flex-col">
            <PreviewPane />
            <div className="flex h-[7px] shrink-0 items-center justify-center bg-[#c6d4e9]"><ScrollArrow className="opacity-60" /></div>
            <ListPane />
          </div>
        </div>
      </main>

      {/* sliver of the browser window behind */}
      <aside className="flex w-2 shrink-0 flex-col bg-[#fafafa]">
        <div className="h-[29px] bg-[#3c70c4]" />
        <div className="h-[61px] bg-[#f3f1f0]" />
        <div className="h-[52px] bg-[#24404f]" />
        <div className="h-[125px] bg-[#6f87ff]" />
      </aside>

      <ExplorerWindow />

      <div className="pointer-events-none absolute right-0 top-[541px] h-[483px] w-[479px] border-[5px] border-[#fb0007] shadow-[inset_12px_-6px_14px_rgba(0,0,0,0.09),2px_10px_14px_rgba(0,0,0,0.12)]" />
      <div className="pointer-events-none absolute right-[284px] top-[849px]"><CursorIcon /></div>
    </div>
  );
}
